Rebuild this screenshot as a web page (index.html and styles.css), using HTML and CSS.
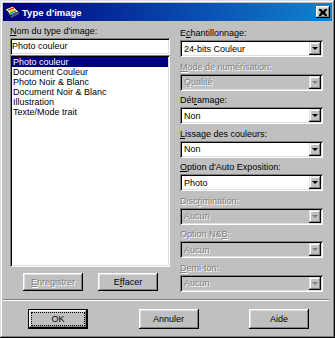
FILE: index.html
```html
<!DOCTYPE html>
<html lang="fr">
<head>
    <meta charset="UTF-8">
    <title>Type d'image</title>
    <link rel="stylesheet" href="styles.css">
</head>
<body>
    <div class="window">
        <div class="titlebar">
            <svg class="app-icon" width="16" height="14" viewBox="0 0 16 14">
                <polygon points="1,4 9,1 15,7 7,11" fill="#e0e0e0" stroke="#000" stroke-width="1"/>
                <line x1="4" y1="5" x2="10" y2="3" stroke="#ff0000" stroke-width="1.2"/>
                <line x1="5" y1="6.5" x2="11" y2="4.5" stroke="#ffd800" stroke-width="1.2"/>
                <line x1="6" y1="8" x2="12" y2="6" stroke="#00a000" stroke-width="1.2"/>
                <line x1="7" y1="9.5" x2="13" y2="7.5" stroke="#0040ff" stroke-width="1.2"/>
                <polygon points="7,11 15,7 15,9 7,13" fill="#606060"/>
            </svg>
            <span class="title">Type d'image</span>
            <button class="close-btn">
                <svg width="8" height="7" viewBox="0 0 8 7">
                    <path d="M0 0h2l2 2 2-2h2v1l-2 2.5 2 2.5v1h-2l-2-2-2 2h-2v-1l2-2.5-2-2.5z" fill="#000"/>
                </svg>
            </button>
        </div>

        <div class="dialog-body">
            <div class="columns">
                <div class="left">
                    <div class="field-label"><u>N</u>om du type d'image:</div>
                    <div class="textbox">Photo couleur</div>
                    <ul class="listbox">
                        <li class="selected">Photo couleur</li>
                        <li>Document Couleur</li>
                        <li>Photo Noir &amp; Blanc</li>
                        <li>Document Noir &amp; Blanc</li>
                        <li>Illustration</li>
                        <li>Texte/Mode trait</li>
                    </ul>
                    <div class="left-buttons">
                        <button class="btn" disabled><u>E</u>nregistrer</button>
                        <button class="btn">E<u>f</u>facer</button>
                    </div>
                </div>

                <div class="right">
                    <div class="group">
                        <div class="field-label">E<u>c</u>hantillonnage:</div>
                        <div class="combo"><span class="value">24-bits Couleur</span><span class="drop"></span></div>
                    </div>
                    <div class="group disabled">
                        <div class="field-label"><u>M</u>ode de numérisation:</div>
                        <div class="combo"><span class="value">Qualité</span><span class="drop"></span></div>
                    </div>
                    <div class="group">
                        <div class="field-label">Dét<u>r</u>amage:</div>
                        <div class="combo"><span class="value">Non</span><span class="drop"></span></div>
                    </div>
                    <div class="group">
                        <div class="field-label"><u>L</u>issage des couleurs:</div>
                        <div class="combo"><span class="value">Non</span><span class="drop"></span></div>
                    </div>
                    <div class="group">
                        <div class="field-label"><u>O</u>ption d'Auto Exposition:</div>
                        <div class="combo"><span class="value">Photo</span><span class="drop"></span></div>
                    </div>
                    <div class="group disabled">
                        <div class="field-label">Disc<u>r</u>imination:</div>
                        <div class="combo"><span class="value">Aucun</span><span class="drop"></span></div>
                    </div>
                    <div class="group disabled">
                        <div class="field-label">Option N&amp;<u>B</u>:</div>
                        <div class="combo"><span class="value">Aucun</span><span class="drop"></span></div>
                    </div>
                    <div class="group disabled">
                        <div class="field-label"><u>D</u>emi-ton:</div>
                        <div class="combo"><span class="value">Aucun</span><span class="drop"></span></div>
                    </div>
                </div>
            </div>

            <div class="separator"></div>

            <div class="footer">
                <button class="btn default"><span class="focus">OK</span></button>
                <button class="btn">Annuler</button>
                <button class="btn">Aide</button>
            </div>
        </div>
    </div>
</body>
</html>
```

FILE: styles.css
```css
* {
    margin: 0;
    padding: 0;
    box-sizing: border-box;
}

body {
    background: #c0c0c0;
    font-family: "Liberation Sans", Arial, sans-serif;
    font-size: 9px;
    color: #000;
}

.window {
    width: 335px;
    height: 338px;
    padding: 3px;
    background: #c0c0c0;
    display: flex;
    flex-direction: column;
    box-shadow: inset -1px -1px #000, inset 1px 1px #dfdfdf,
                inset -2px -2px #808080, inset 2px 2px #fff;
}

/* title bar */
.titlebar {
    height: 18px;
    display: flex;
    align-items: center;
    gap: 2px;
    padding: 0 2px 0 1px;
    background: linear-gradient(to right, #000080, #1084d0);
}

.app-icon {
    flex-shrink: 0;
}

.title {
    flex: 1;
    color: #fff;
    font-weight: bold;
    font-size: 9.5px;
}

.close-btn {
    width: 14px;
    height: 12px;
    border: none;
    background: #c0c0c0;
    display: flex;
    align-items: center;
    justify-content: center;
    box-shadow: inset -1px -1px #000, inset 1px 1px #fff,
                inset -2px -2px #808080, inset 2px 2px #dfdfdf;
}

/* body */
.dialog-body {
    flex: 1;
    padding: 4px 9px 0 7px;
    display: flex;
    flex-direction: column;
}

.columns {
    display: flex;
    gap: 10px;
    height: 271px;
}

.left {
    width: 160px;
    display: flex;
    flex-direction: column;
}

.right {
    flex: 1;
    padding-top: 2px;
}

.field-label {
    height: 13px;
    line-height: 13px;
    white-space: nowrap;
}

.sunken {
    background: #fff;
}

.textbox, .listbox, .combo {
    background: #fff;
    box-shadow: inset 1px 1px #808080, inset -1px -1px #fff,
                inset 2px 2px #000, inset -2px -2px #dfdfdf;
}

.textbox {
    height: 17px;
    line-height: 13px;
    padding: 2px 2px;
}

.listbox {
    list-style: none;
    height: 212px;
    padding: 2px;
}

.listbox li {
    height: 10px;
    line-height: 10px;
    padding-left: 1px;
    white-space: nowrap;
}

.listbox li.selected {
    background: #000080;
    color: #fff;
}

.left-buttons {
    display: flex;
    gap: 15px;
    margin-top: 6px;
    padding-left: 13px;
}

.left-buttons .btn {
    width: 60px;
    height: 18px;
}

/* buttons */
.btn {
    font-family: inherit;
    font-size: 9px;
    background: #c0c0c0;
    color: #000;
    border: none;
    box-shadow: inset -1px -1px #000, inset 1px 1px #fff,
                inset -2px -2px #808080, inset 2px 2px #dfdfdf;
}

.btn:disabled {
    color: #808080;
    text-shadow: 1px 1px #fff;
}

.btn.default {
    box-shadow: inset 0 0 0 1px #000, inset -2px -2px #000, inset 2px 2px #fff,
                inset -3px -3px #808080, inset 3px 3px #dfdfdf;
    padding: 4px;
    display: flex;
}

.focus {
    flex: 1;
    display: flex;
    align-items: center;
    justify-content: center;
    outline: 1px dotted #000;
}

/* combo boxes */
.group {
    margin-bottom: 3.5px;
}

.combo {
    height: 17px;
    display: flex;
    align-items: center;
    padding: 2px 2px 2px 4px;
}

.combo .value {
    flex: 1;
    white-space: nowrap;
}

.combo .drop {
    width: 12px;
    height: 13px;
    background: #c0c0c0;
    position: relative;
    box-shadow: inset -1px -1px #000, inset 1px 1px #dfdfdf,
                inset -2px -2px #808080, inset 2px 2px #fff;
}

.combo .drop::after {
    content: "";
    position: absolute;
    left: 3px;
    top: 5px;
    border-left: 3px solid transparent;
    border-right: 3px solid transparent;
    border-top: 3px solid #000;
}

.group.disabled .field-label,
.group.disabled .value {
    color: #808080;
    text-shadow: 1px 1px #fff;
}

.group.disabled .combo {
    background: #c0c0c0;
}

.group.disabled .drop::after {
    border-top-color: #808080;
}

/* separator and footer */
.separator {
    margin: 3px -6px 0 -7px;
    border-top: 1px solid #808080;
    border-bottom: 1px solid #fff;
}

.footer {
    display: flex;
    gap: 50.5px;
    padding: 8px 0 0 18px;
}

.footer .btn {
    width: 60px;
    height: 20px;
}
```
